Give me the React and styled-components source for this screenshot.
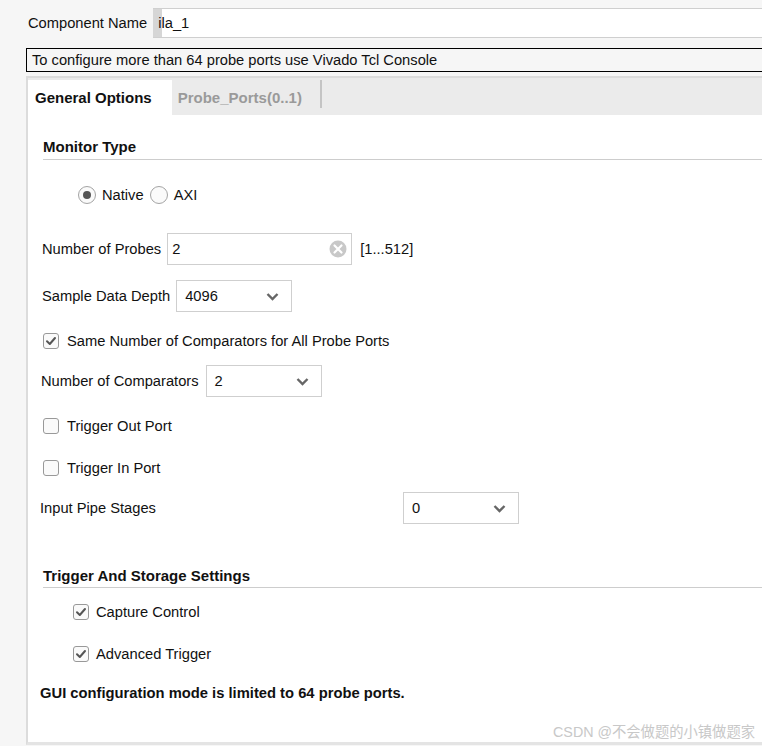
import React from "react";
import styled, { createGlobalStyle } from "styled-components";

const GlobalStyle = createGlobalStyle`
  html, body {
    margin: 0;
    padding: 0;
    background: #f6f6f6;
  }
  body {
    font-family: "Liberation Sans", Arial, sans-serif;
    font-size: 14.7px;
    color: #111;
  }
`;

const Page = styled.div`
  position: relative;
  width: 762px;
  height: 746px;
  overflow: hidden;
  padding-top: 8px;
  box-sizing: border-box;
`;

const NameRow = styled.div`
  display: flex;
  align-items: center;
  gap: 6px;
  margin-left: 28px;
  height: 30px;
`;

const NameInput = styled.div`
  flex: 1;
  height: 30px;
  box-sizing: border-box;
  border-top: 1px solid #cfcfcf;
  border-bottom: 1px solid #cfcfcf;
  background: linear-gradient(to right, #d6d6d6 9px, #fff 9px);
  display: flex;
  align-items: center;
  padding-left: 5px;
`;

const InfoBox = styled.div`
  margin: 10px 0 0 26px;
  height: 24px;
  box-sizing: border-box;
  border: 1px solid #000;
  border-right: none;
  display: flex;
  align-items: center;
  padding-left: 5px;
`;

const Panel = styled.div`
  margin: 4px 0 0 26px;
  border-left: 2px solid #dcdcdc;
  border-top: 2px solid #dcdcdc;
  border-bottom: 3px solid #e4e4e4;
`;

const TabBar = styled.div`
  display: flex;
  align-items: flex-end;
  height: 37px;
  background: #ebebeb;
`;

const Tab = styled.div`
  height: 35px;
  display: flex;
  align-items: center;
  box-sizing: border-box;
  font-weight: bold;
  font-size: 15px;
  padding: ${(p) => (p.active ? "0 20px 0 7px" : "0 18px 0 6px")};
  background: ${(p) => (p.active ? "#fff" : "transparent")};
  color: ${(p) => (p.active ? "#111" : "#9a9a9a")};
`;

const TabSep = styled.div`
  width: 2px;
  height: 28px;
  margin-bottom: 7px;
  background: #c4c4c4;
`;

const Content = styled.div`
  background: #fff;
  display: flex;
  flex-direction: column;
  padding: 0 0 40px 15px;
`;

const SectionTitle = styled.div`
  margin-top: ${(p) => p.top}px;
  height: 18px;
  line-height: 18px;
  font-weight: bold;
  font-size: 15px;
  padding-bottom: ${(p) => p.pad}px;
  border-bottom: 1px solid #cdcdcd;
`;

const Row = styled.div`
  display: flex;
  align-items: center;
  gap: ${(p) => (p.gap !== undefined ? p.gap : 6)}px;
  margin-top: ${(p) => p.top}px;
  margin-left: ${(p) => p.indent || 0}px;
  height: ${(p) => p.h || 20}px;
`;

const Label = styled.span`
  width: ${(p) => (p.w ? `${p.w}px` : "auto")};
  flex-shrink: 0;
`;

const RadioCircle = styled.span`
  width: 18px;
  height: 18px;
  box-sizing: border-box;
  border-radius: 50%;
  border: 1px solid #a4a4a4;
  background: #fafafa;
  display: flex;
  align-items: center;
  justify-content: center;
  &::after {
    content: "";
    width: 8px;
    height: 8px;
    border-radius: 50%;
    background: ${(p) => (p.checked ? "#555" : "transparent")};
  }
`;

const RadioItem = styled.label`
  display: flex;
  align-items: center;
  gap: 6px;
`;

const RadioGroup = styled.div`
  display: flex;
  align-items: center;
  gap: 6px;
`;

const Box = styled.span`
  width: 16px;
  height: 16px;
  box-sizing: border-box;
  border: 1px solid #999;
  border-radius: 3px;
  background: #fafafa;
  display: flex;
  align-items: center;
  justify-content: center;
`;

const TextField = styled.div`
  width: 185px;
  height: 32px;
  box-sizing: border-box;
  border: 1px solid #cfcfcf;
  display: flex;
  align-items: center;
  justify-content: space-between;
  padding: 0 4px 0 4px;
`;

const Select = styled.div`
  width: 116px;
  height: 32px;
  box-sizing: border-box;
  border: 1px solid #cfcfcf;
  display: flex;
  align-items: center;
  justify-content: space-between;
  padding: 0 12px 0 8px;
`;

const Range = styled.span`
  margin-left: 2px;
`;

const Note = styled.div`
  margin-top: 20px;
  margin-left: -3px;
  height: 18px;
  line-height: 18px;
  font-weight: bold;
  font-size: 14.75px;
`;

const Watermark = styled.div`
  position: absolute;
  right: 7px;
  bottom: 5px;
  font-family: "Liberation Sans", "Noto Sans CJK SC", sans-serif;
  font-size: 14.3px;
  color: #c8c8c8;
`;

const Check = () => (
  <svg width="12" height="12" viewBox="0 0 12 12">
    <path d="M2 6.3 L4.8 9 L10 3" fill="none" stroke="#555" strokeWidth="2" strokeLinecap="round" strokeLinejoin="round" />
  </svg>
);

const Checkbox = ({ checked }) => <Box>{checked && <Check />}</Box>;

const Chevron = () => (
  <svg width="13" height="9" viewBox="0 0 13 9">
    <path d="M1.5 2 L6.5 7 L11.5 2" fill="none" stroke="#666" strokeWidth="2.4" />
  </svg>
);

const ClearIcon = () => (
  <svg width="18" height="18" viewBox="0 0 18 18">
    <circle cx="9" cy="9" r="8.5" fill="#c8c8c8" />
    <path d="M5.5 5.5 L12.5 12.5 M12.5 5.5 L5.5 12.5" stroke="#fff" strokeWidth="2.2" strokeLinecap="round" />
  </svg>
);

const Dropdown = ({ value }) => (
  <Select>
    <span>{value}</span>
    <Chevron />
  </Select>
);

export default function App() {
  return (
    <Page>
      <GlobalStyle />
      <NameRow>
        <Label>Component Name</Label>
        <NameInput>ila_1</NameInput>
      </NameRow>
      <InfoBox>To configure more than 64 probe ports use Vivado Tcl Console</InfoBox>
      <Panel>
        <TabBar>
          <Tab active>General Options</Tab>
          <Tab>Probe_Ports(0..1)</Tab>
          <TabSep />
        </TabBar>
        <Content>
          <SectionTitle top={23} pad={3}>Monitor Type</SectionTitle>
          <Row top={25} indent={35}>
            <RadioGroup>
              <RadioItem>
                <RadioCircle checked />
                Native
              </RadioItem>
              <RadioItem>
                <RadioCircle />
                AXI
              </RadioItem>
            </RadioGroup>
          </Row>
          <Row top={28} h={32} indent={-1}>
            <Label>Number of Probes</Label>
            <TextField>
              <span>2</span>
              <ClearIcon />
            </TextField>
            <Range>[1...512]</Range>
          </Row>
          <Row top={15} h={32} indent={-1}>
            <Label>Sample Data Depth</Label>
            <Dropdown value="4096" />
          </Row>
          <Row top={19} gap={8}>
            <Checkbox checked />
            <span>Same Number of Comparators for All Probe Ports</span>
          </Row>
          <Row top={14} h={32} indent={-2} gap={7}>
            <Label>Number of Comparators</Label>
            <Dropdown value="2" />
          </Row>
          <Row top={19} gap={8}>
            <Checkbox />
            <span>Trigger Out Port</span>
          </Row>
          <Row top={22} gap={8}>
            <Checkbox />
            <span>Trigger In Port</span>
          </Row>
          <Row top={14} h={32} indent={-3} gap={0}>
            <Label w={363}>Input Pipe Stages</Label>
            <Dropdown value="0" />
          </Row>
          <SectionTitle top={43} pad={2}>Trigger And Storage Settings</SectionTitle>
          <Row top={14} indent={30} gap={7}>
            <Checkbox checked />
            <span>Capture Control</span>
          </Row>
          <Row top={22} indent={30} gap={7}>
            <Checkbox checked />
            <span>Advanced Trigger</span>
          </Row>
          <Note>GUI configuration mode is limited to 64 probe ports.</Note>
        </Content>
      </Panel>
      <Watermark>CSDN @不会做题的小镇做题家</Watermark>
    </Page>
  );
}
